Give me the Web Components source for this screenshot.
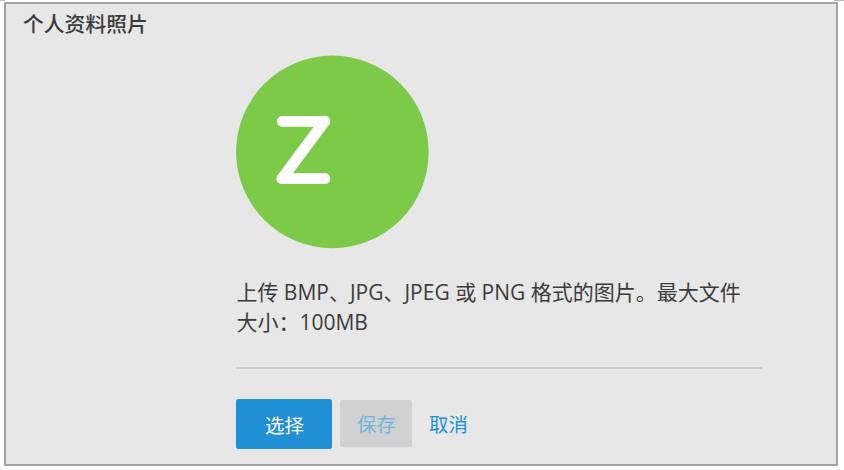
<!DOCTYPE html>
<html lang="zh-CN">
<head>
<meta charset="utf-8">
<title>个人资料照片</title>
<style>
html,body{margin:0;height:100%;background:#fff}
body{font-family:"Open Sans","Noto Sans","Noto Sans CJK SC",sans-serif;color:#3b3b3b;overflow:hidden}
</style>
</head>
<body>
<photo-panel>
  <span slot="title">个人资料照片</span>
  <user-avatar letter="Z"></user-avatar>
  <upload-hint>上传 BMP、JPG、JPEG 或 PNG 格式的图片。最大文件大小：100MB</upload-hint>
  <action-button slot="actions" kind="primary">选择</action-button>
  <action-button slot="actions" kind="disabled">保存</action-button>
  <action-button slot="actions" kind="link">取消</action-button>
</photo-panel>
<script>
class PhotoPanel extends HTMLElement{
  constructor(){
    super();
    this.attachShadow({mode:'open'}).innerHTML=`<style>
      :host{display:block;box-sizing:border-box;height:470px;padding-top:1px;overflow:hidden}
      .edge{display:flex;justify-content:space-between;height:1px;margin-top:-1px}
      .edge i{background:#bbb;height:1px}
      .edge i:first-child{width:5px}.edge i:last-child{width:10px}
      section{box-sizing:border-box;width:834px;height:464px;margin:1px 0 0 4px;border:2px solid #a3a3a3;border-radius:1px;background:#e7e7e7;padding:4px 0 0 17px}
      h1{margin:0;height:32px;font-size:20.8px;line-height:32px;font-weight:500}
      .content{margin-left:213.4px;width:526px;padding-top:15px}
      .actions{display:flex;align-items:flex-start;margin-top:30px}
      .rule{height:2px;background:#cdcdcd;margin-top:30px}
    </style>
    <div class="edge"><i></i><i></i></div>
    <section><h1><slot name="title"></slot></h1>
      <div class="content"><slot></slot><div class="rule"></div>
      <div class="actions"><slot name="actions"></slot></div></div>
    </section>`;
  }
}
class UserAvatar extends HTMLElement{
  constructor(){
    super();
    this.attachShadow({mode:'open'}).innerHTML=`<style>
      :host{display:block;width:193px;height:194px}
      svg{display:block}
      circle{fill:#7dca49}
      text{font-family:Lato,sans-serif;font-size:82.5px;font-weight:100;fill:#fff;stroke:#fff;stroke-width:9.8px;stroke-linejoin:round}
    </style>
    <svg width="193" height="194"><circle cx="96.4" cy="96.9" r="96.3"/><text x="42" y="123.8" textLength="51" lengthAdjust="spacingAndGlyphs"></text></svg>`;
  }
  connectedCallback(){this.shadowRoot.querySelector('text').textContent=this.getAttribute('letter')}
}
class UploadHint extends HTMLElement{
  constructor(){
    super();
    this.attachShadow({mode:'open'}).innerHTML=`<style>
      :host{display:block;margin-top:28px;width:520px;height:60px;font-size:21px;line-height:30px}
    </style><slot></slot>`;
  }
}
class ActionButton extends HTMLElement{
  constructor(){
    super();
    this.attachShadow({mode:'open'}).innerHTML=`<style>
      :host{display:block;margin-top:1px}
      button{display:flex;align-items:center;justify-content:center;box-sizing:border-box;border:0;border-radius:2.5px;padding:0;background:none;font:inherit;font-size:19.4px;color:#2190d6;width:72px;height:47px}
      :host([kind=primary]){margin-top:0}
      :host([kind=primary]) button{width:96px;height:50px;background:#2190d6;color:#fff}
      :host([kind=disabled]){margin-left:8px}
      :host([kind=disabled]) button{background:#d1d1d1;color:#74b4dd}
    </style><button><slot></slot></button>`;
  }
}
customElements.define('photo-panel',PhotoPanel);
customElements.define('user-avatar',UserAvatar);
customElements.define('upload-hint',UploadHint);
customElements.define('action-button',ActionButton);
</script>
</body>
</html>
